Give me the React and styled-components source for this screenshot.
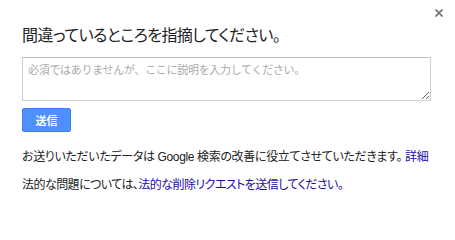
import styled, { createGlobalStyle } from 'styled-components';

const GlobalStyle = createGlobalStyle`
  body {
    margin: 0;
    background: #fff;
    font-family: "Liberation Sans", "Noto Sans CJK JP", sans-serif;
    font-feature-settings: 'palt';
  }
`;

const Dialog = styled.div`
  position: relative;
  width: 455px;
  height: 223px;
  box-sizing: border-box;
  padding: 24px 24px 0 22px;
  color: #222;
`;

const CloseButton = styled.button`
  position: absolute;
  top: 6px;
  right: 9px;
  width: 14px;
  height: 14px;
  padding: 0;
  border: none;
  background: none;
  display: flex;
  align-items: center;
  justify-content: center;
  cursor: pointer;
`;

const Title = styled.h1`
  margin: 0;
  font-size: 16px;
  font-weight: normal;
  line-height: 24px;
  letter-spacing: -0.55px;
  color: #222;
`;

const Comment = styled.textarea`
  display: block;
  margin-top: 9px;
  width: 409px;
  height: 44px;
  box-sizing: border-box;
  padding: 3px 5px;
  border: 1px solid #d0d0d0;
  border-top-color: #c0c0c0;
  font-family: inherit;
  font-size: 11px;
  letter-spacing: -0.3px;
  color: #222;
  resize: vertical;
  outline: none;

  &::placeholder {
    color: #aaa;
  }
`;

const SubmitButton = styled.button`
  display: block;
  margin-top: 7px;
  width: 49px;
  height: 24px;
  padding: 0;
  border: 1px solid #3d82f0;
  border-radius: 2px;
  background: #4d90fe;
  color: #fff;
  font-family: inherit;
  font-size: 11px;
  font-weight: bold;
  cursor: pointer;
`;

const Note = styled.p`
  margin: ${({ $gap }) => $gap}px 0 0;
  font-size: 12px;
  line-height: 16px;
  letter-spacing: ${({ $tight }) => ($tight ? -0.55 : -0.35)}px;
  color: #222;
  white-space: nowrap;
`;

const Link = styled.a`
  color: #1a0dab;
  text-decoration: none;
`;

export default function App() {
  return (
    <>
      <GlobalStyle />
      <Dialog>
        <CloseButton aria-label="閉じる">
          <svg width="8" height="8" viewBox="0 0 8 8">
            <path d="M0.5 0.5 L7.5 7.5 M7.5 0.5 L0.5 7.5" stroke="#777" strokeWidth="1.8" />
          </svg>
        </CloseButton>
        <Title>間違っているところを指摘してください。</Title>
        <Comment placeholder="必須ではありませんが、ここに説明を入力してください。" />
        <SubmitButton>送信</SubmitButton>
        <Note $gap={17}>
          お送りいただいたデータは Google 検索の改善に役立てさせていただきます。 <Link href="#">詳細</Link>
        </Note>
        <Note $gap={12} $tight>
          法的な問題については、<Link href="#">法的な削除リクエストを送信してください。</Link>
        </Note>
      </Dialog>
    </>
  );
}
